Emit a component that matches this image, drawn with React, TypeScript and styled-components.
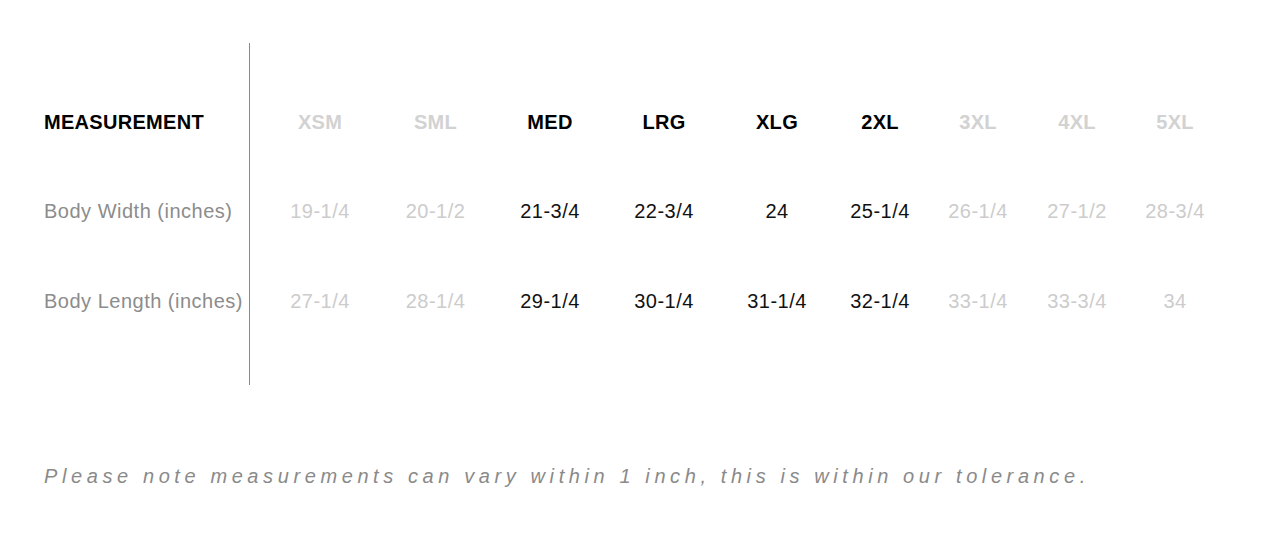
import styled, { createGlobalStyle } from 'styled-components';

type Size = { name: string; width: string; length: string; active: boolean };

const sizes: Size[] = [
  { name: 'XSM', width: '19-1/4', length: '27-1/4', active: false },
  { name: 'SML', width: '20-1/2', length: '28-1/4', active: false },
  { name: 'MED', width: '21-3/4', length: '29-1/4', active: true },
  { name: 'LRG', width: '22-3/4', length: '30-1/4', active: true },
  { name: 'XLG', width: '24', length: '31-1/4', active: true },
  { name: '2XL', width: '25-1/4', length: '32-1/4', active: true },
  { name: '3XL', width: '26-1/4', length: '33-1/4', active: false },
  { name: '4XL', width: '27-1/2', length: '33-3/4', active: false },
  { name: '5XL', width: '28-3/4', length: '34', active: false },
];

export function App() {
  return (
    <Page>
      <GlobalStyle />
      <Chart>
        <LabelColumn>
          <HeadCell>MEASUREMENT</HeadCell>
          <LabelCell>Body Width (inches)</LabelCell>
          <LabelCell>Body Length (inches)</LabelCell>
        </LabelColumn>
        <SizeGrid>
          {sizes.map(s => (
            <SizeHead key={s.name} active={s.active}>
              {s.name}
            </SizeHead>
          ))}
          {sizes.map(s => (
            <ValueCell key={s.name + '-w'} active={s.active}>
              {s.width}
            </ValueCell>
          ))}
          {sizes.map(s => (
            <ValueCell key={s.name + '-l'} active={s.active}>
              {s.length}
            </ValueCell>
          ))}
        </SizeGrid>
      </Chart>
      <Note>Please note measurements can vary within 1 inch, this is within our tolerance.</Note>
    </Page>
  );
}

const GlobalStyle = createGlobalStyle`
  body {
    margin: 0;
    background: #ffffff;
    font-family: 'Liberation Sans', Arial, Helvetica, sans-serif;
  }
`;

const Page = styled.div`
  width: 1274px;
  height: 544px;
  padding: 43px 0 0 44px;
  box-sizing: border-box;
`;

const Chart = styled.div`
  display: flex;
  flex-direction: row;
`;

// row heights shared by the label column and the size grid
const rows = 'grid-template-rows: 87px 91px 88px;';

const LabelColumn = styled.div`
  width: 205px;
  border-right: 1px solid #8a8a8a;
  padding: 36px 0 40px;
  display: grid;
  ${rows}
`;

const Cell = styled.div`
  display: flex;
  align-items: center;
  white-space: nowrap;
`;

const HeadCell = styled(Cell)`
  font-size: 20px;
  font-weight: bold;
  letter-spacing: 0.3px;
  color: #000000;
`;

const LabelCell = styled(Cell)`
  font-size: 20px;
  letter-spacing: 0.5px;
  color: #8c8c8c;
`;

const SizeGrid = styled.div`
  margin-left: 12px;
  padding: 36px 0 40px;
  display: grid;
  grid-template-columns: 116px 115px 114px 114px 112px 94px 102px 96px 100px;
  ${rows}
`;

const SizeHead = styled(Cell)<{ active: boolean }>`
  justify-content: center;
  font-size: 20px;
  font-weight: bold;
  letter-spacing: 0.3px;
  color: ${props => (props.active ? '#000000' : '#d2d2d2')};
`;

const ValueCell = styled(Cell)<{ active: boolean }>`
  justify-content: center;
  font-size: 20px;
  letter-spacing: 0.5px;
  color: ${props => (props.active ? '#111111' : '#cccccc')};
`;

const Note = styled.p`
  margin: 80px 0 0;
  font-size: 20px;
  font-style: italic;
  letter-spacing: 4.6px;
  color: #8a8a8a;
  white-space: nowrap;
`;

export default App;
